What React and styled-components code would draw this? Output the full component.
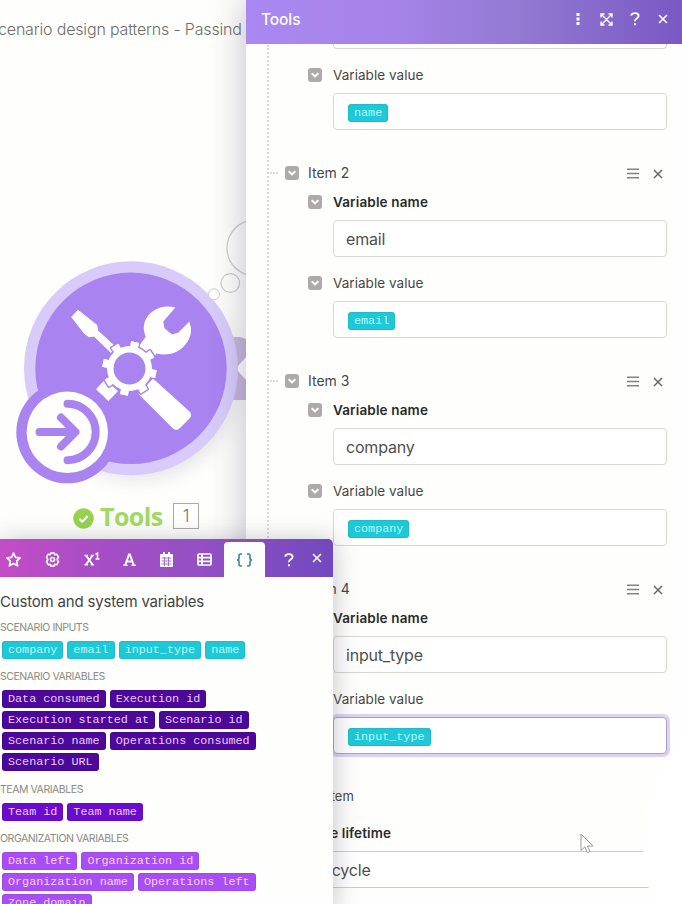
import React from "react";
import styled, { createGlobalStyle, css } from "styled-components";

const GlobalStyle = createGlobalStyle`
  *, *::before, *::after { box-sizing: border-box; }
  body { margin: 0; background: #fefefc; font-family: Inter, sans-serif; color: #484848; }
`;

const Page = styled.main`
  position: relative;
  display: grid;
  grid-template-columns: 246px 436px;
  width: 682px;
  height: 904px;
  overflow: hidden;
  background: #fefefc;
`;

/* ---------- canvas ---------- */

const Canvas = styled.section`
  position: relative;
  overflow: hidden;
`;

const ScenarioTitle = styled.h1`
  margin: 0;
  padding: 18px 0 0 0;
  margin-left: -2px;
  font-size: 16px;
  line-height: 22px;
  font-weight: 300;
  letter-spacing: -0.17px;
  white-space: nowrap;
  color: #6e6e68;
`;

const NodeDrawing = styled.svg`
  position: absolute;
  left: 0;
  top: 210px;
  width: 246px;
  height: 290px;
`;

const NodeCaption = styled.div`
  position: absolute;
  left: 73px;
  top: 500px;
  display: flex;
  align-items: center;
  height: 32px;
`;

const CheckIcon = styled.svg`
  width: 21px;
  height: 21px;
  margin: 5px 6px 0 0;
`;

const NodeName = styled.span`
  width: 73px;
  font: 700 25px/32px "Open Sans", sans-serif;
  letter-spacing: -0.6px;
  color: #a3d964;
`;

const NodeCount = styled.span`
  display: grid;
  place-items: center;
  width: 26px;
  height: 26px;
  border: 1px solid #a9a9a9;
  background: #fff;
  font-size: 17px;
  font-weight: 300;
  color: #777;
`;

/* ---------- settings panel ---------- */

const Panel = styled.section`
  position: relative;
  display: flex;
  flex-direction: column;
  background: #fefefc;
  box-shadow: -2px 0 32px rgba(60, 60, 90, 0.3);
  min-width: 0;
  overflow: visible;
`;

const PanelHeader = styled.header`
  display: flex;
  align-items: center;
  flex: none;
  height: 44px;
  padding: 0 10px 6px 15px;
  background: linear-gradient(90deg, #a988f2 0%, #a583e8 35%, #937ad2 62%, #7a58c4 100%);
  color: #fff;
`;

const PanelTitle = styled.h2`
  flex: 1;
  margin: 0;
  font-size: 15.5px;
  font-weight: 500;
  line-height: 20px;
  letter-spacing: -0.1px;
  padding-top: 2px;
`;

const HeaderActions = styled.div`
  display: flex;
  align-items: center;
  gap: 10.5px;
`;

const HeaderButton = styled.span`
  display: grid;
  place-items: center;
  width: 18px;
  height: 18px;
  color: #fff;
`;

const PanelBody = styled.div`
  position: relative;
  flex: 1;
  overflow: hidden;
`;

const TreeLine = styled.div`
  position: absolute;
  left: 21px;
  top: 1px;
  height: 620px;
  border-left: 2px dotted #dadad8;
`;

const HighlightDisc = styled.div`
  position: absolute;
  left: 397px;
  top: 637px;
  width: 328px;
  height: 328px;
  border-radius: 50%;
  background: #fff;
`;

const FieldRow = styled.div`
  display: flex;
  align-items: center;
  height: 36px;
  padding-left: 62px;
  margin-top: ${(p) => (p.$spaced ? "8px" : "0")};
`;

const FieldLabel = styled.span`
  margin-left: 11px;
  font-size: 13.5px;
  line-height: 18px;
  font-weight: ${(p) => (p.$strong ? 600 : 400)};
  letter-spacing: ${(p) => (p.$strong ? "0.15px" : "0.05px")};
  color: ${(p) => (p.$strong ? "#2b2b2b" : "#484848")};
`;

const Field = styled.div`
  display: flex;
  align-items: center;
  height: ${(p) => (p.$clipped ? "5px" : "37px")};
  width: 334px;
  margin-left: 87px;
  padding: 0 12px;
  border: 1px solid #dcd4cf;
  border-radius: 4px;
  background: #fff;
  font-size: 16px;
  letter-spacing: -0.2px;
  font-weight: 400;
  color: #505050;
  ${(p) => p.$clipped && css`
    border-top: 0;
    border-radius: 0 0 4px 4px;
    background: transparent;
  `}
  ${(p) => p.$focused && css`
    border-color: #aaa0cf;
    box-shadow: 0 0 0 3px #ddd2f1;
  `}
`;

const ItemHeader = styled.div`
  position: relative;
  display: flex;
  align-items: center;
  height: 22px;
  padding: 0 17px 0 39px;
  font-size: 14px;

  &::before {
    content: "";
    position: absolute;
    left: 24px;
    top: 10px;
    width: 8px;
    border-top: 2px dotted #dadad8;
  }
`;

const ItemName = styled.span`
  flex: 1;
  margin-left: 9px;
  padding-bottom: 2px;
`;

const ItemActions = styled.span`
  display: flex;
  align-items: center;
  gap: 14px;
  padding-top: 1px;
  padding-right: 2px;
  color: #66666a;
`;

const ItemBlock = styled.div`
  height: 208px;
`;

const FirstBlock = styled.div`
  height: 118px;
`;

const AddItem = styled.div`
  height: 20px;
  padding-left: 53px;
  font-size: 13px;
  line-height: 20px;
`;

const Lifetime = styled.div`
  padding-top: 27px;
  padding-left: 38px;
  height: 45px;
  font-size: 13.5px;
  line-height: 0;
  font-weight: 600;
  letter-spacing: 0.1px;
  color: #2b2b2b;
`;

const LifetimeField = styled(Field)`
  width: 386px;
  margin-left: 35px;
  padding-left: 15px;
  border-color: #ccc;
`;

const ToggleBox = styled.span`
  display: grid;
  place-items: center;
  flex: none;
  width: 14px;
  height: 14px;
  border-radius: 3px;
  background: #afa9a8;
`;

const Cursor = styled.svg`
  position: absolute;
  left: 580px;
  top: 833px;
  width: 14px;
  height: 21px;
`;

/* ---------- variables popup ---------- */

const Popup = styled.aside`
  position: absolute;
  left: 0;
  top: 539px;
  width: 333px;
  height: 375px;
  border-radius: 0 5px 0 0;
  background: #fefefc;
  box-shadow: 2px 0 24px rgba(60, 60, 90, 0.27);
`;

const TabBar = styled.nav`
  display: grid;
  grid-template-columns: 33px 39px 39px 37px 37px 39px 41px 48px 20px;
  align-items: end;
  height: 38px;
  border-radius: 0 5px 0 0;
  background: linear-gradient(90deg, #c34dc6 0%, #a84dc5 28%, #9450c4 60%, #7149bd 100%);
  color: #fff;
`;

const Tab = styled.span`
  display: grid;
  place-items: center;
  height: 35px;
  ${(p) => p.$active && css`
    background: #fefefc;
    border-radius: 4px 4px 0 0;
    color: #3b7fa0;
  `}
`;

const FirstTab = styled(Tab)`
  margin-left: -7px;
`;

const CloseTab = styled(Tab)`
  margin-left: -13px;
  padding-bottom: 3px;
`;

const PopupBody = styled.div`
  padding-top: 14.5px;
`;

const PopupTitle = styled.h3`
  margin: 0 0 8px;
  height: 20px;
  font-size: 15px;
  line-height: 20px;
  font-weight: 400;
  letter-spacing: -0.18px;
  color: #444;
  white-space: nowrap;
`;

const Group = styled.section`
  margin-bottom: 10.5px;
`;

const GroupTitle = styled.h4`
  margin: 0;
  height: 21px;
  font-size: 10.5px;
  line-height: 16px;
  font-weight: 400;
  letter-spacing: -0.45px;
  color: #8b8b84;
`;

const ChipLine = styled.div`
  display: flex;
  gap: 4px;
  padding-left: 2px;
  margin-bottom: 3px;
  &:last-child { margin-bottom: 0; }
`;

const tones = {
  cyan: ["#1fc8d6", "#b5fbff"],
  indigo: ["#4b0899", "#efc9ff"],
  violet: ["#6b0bcb", "#f4c8ff"],
  purple: ["#a94df5", "#fbd2ff"],
};

const Chip = styled.span`
  display: inline-block;
  height: 18px;
  padding: 0 6px;
  border-radius: 3px;
  background: ${(p) => tones[p.$tone][0]};
  color: ${(p) => tones[p.$tone][1]};
  box-shadow: inset 0 0 0 1px rgba(0, 0, 0, 0.06);
  font: 400 11.75px/18px "Liberation Mono", monospace;
  letter-spacing: 0;
  white-space: pre;
`;

const FieldChip = styled(Chip)`
  margin: 2px 0 0 2px;
`;

const Toggle = () => (
  <ToggleBox>
    <svg width="8" height="8" viewBox="0 0 8 8">
      <path d="M.7 2.200 4 5.400 7.300 2.200" fill="none" stroke="#fff" strokeWidth="2" />
    </svg>
  </ToggleBox>
);

const Cross = ({ size = 10, weight = 1.6 }) => (
  <svg width={size} height={size} viewBox="0 0 10 10" stroke="currentColor" strokeWidth={weight}>
    <path d="M1 1 9 9M9 1 1 9" />
  </svg>
);

const Question = () => (
  <svg width="10" height="14" viewBox="0 0 10 14" fill="none" stroke="currentColor" strokeWidth="1.8">
    <path d="M1.2 3.6C1.6 .5 8.6 .2 8.6 4 8.6 6.3 4.9 6.4 4.9 9.2" />
    <path d="M4 11.3h2v2H4z" fill="currentColor" stroke="none" />
  </svg>
);

const Valued = ({ value, focused }) => (
  <>
    <FieldRow $spaced>
      <Toggle />
      <FieldLabel>Variable value</FieldLabel>
    </FieldRow>
    <Field $focused={focused}>
      <FieldChip $tone="cyan">{value}</FieldChip>
    </Field>
  </>
);

const Item = ({ index, name, focused }) => (
  <ItemBlock>
    <ItemHeader>
      <Toggle />
      <ItemName>Item {index}</ItemName>
      <ItemActions>
        <svg width="12" height="11" viewBox="0 0 12 11" stroke="#82828a" strokeWidth="1.5">
          <path d="M0 1.2h12M0 5.5h12M0 9.8h12" />
        </svg>
        <Cross size={10} weight={1.5} />
      </ItemActions>
    </ItemHeader>
    <FieldRow>
      <Toggle />
      <FieldLabel $strong>Variable name</FieldLabel>
    </FieldRow>
    <Field>{name}</Field>
    <Valued value={name} focused={focused} />
  </ItemBlock>
);

const groups = [
  { title: "SCENARIO INPUTS", tone: "cyan", lines: [["company", "email", "input_type", "name"]] },
  {
    title: "SCENARIO VARIABLES",
    tone: "indigo",
    lines: [
      ["Data consumed", "Execution id"],
      ["Execution started at", "Scenario id"],
      ["Scenario name", "Operations consumed"],
      ["Scenario URL"],
    ],
  },
  { title: "TEAM VARIABLES", tone: "violet", lines: [["Team id", "Team name"]] },
  {
    title: "ORGANIZATION VARIABLES",
    tone: "purple",
    lines: [["Data left", "Organization id"], ["Organization name", "Operations left"], ["Zone domain"]],
  },
];

const teeth = [12, 57, 102, 147, 192, 237, 282, 327];

const ToolsNode = () => (
  <NodeDrawing viewBox="0 210 246 290">
    <defs>
      <filter id="soft" x="-30%" y="-30%" width="160%" height="160%">
        <feGaussianBlur stdDeviation="9" />
      </filter>
    </defs>
    <g fill="#fefefc" fillOpacity=".5" stroke="#ccccc8" strokeWidth="1.2">
      <circle cx="255" cy="248" r="28" />
      <circle cx="230.3" cy="283" r="9.3" />
    </g>
    <circle cx="138" cy="380" r="100" fill="#555570" opacity=".15" filter="url(#soft)" />
    <path d="M226 337h14l6 2v18l-10 11.500 10 11.500v20h-20z" fill="#c6b7dd" />
    <path d="M247 356 236 368.500 247 381z" fill="#fff" />
    <circle cx="131" cy="368.300" r="107" fill="#d8cbfa" />
    <circle cx="131" cy="368.300" r="95.700" fill="#a983f0" />
    <circle cx="214" cy="294.300" r="5.500" fill="#fff" stroke="#d0ccd8" />
    <g fill="#fff">
      <path d="M71.700 317 78 310.300 96.700 325 97.700 330.700 116 347.500 111 352.500 94 336 89 336.700 84.500 333.500Z" stroke="#fff" strokeLinejoin="round" />
      <path d="M175.300 307.500C158 303 142 315 144 331L145.700 337 138 347 152 360 156.500 353.500C175 358 189 346 191 332V328L189.300 321.500 178.500 332.500 172 334.500 164.300 328 163.300 321.500Z" />
      <path d="M153 378.500 189.500 411.500Q192.500 414.500 190 418L180 428Q176.500 431.500 173 428.500L138.500 394Z" />
      <path d="M105 379.500 96 389.300 108.300 401.300 118 391Z" />
    </g>
    <g fill="#fff" stroke="#a983f0" strokeWidth="3" strokeLinejoin="round" paintOrder="stroke">
      {teeth.map((a) => (
        <rect key={a} x="125.500" y="341.500" width="8" height="10" transform={`rotate(${a} 129.500 368.500)`} />
      ))}
      <circle cx="129.500" cy="368.500" r="22.500" />
    </g>
    <g fill="#fff">
      {teeth.map((a) => (
        <rect key={a} x="125.500" y="341.500" width="8" height="10" transform={`rotate(${a} 129.500 368.500)`} />
      ))}
    </g>
    <circle cx="129.500" cy="368.500" r="16" fill="#a983f0" />
    <circle cx="67.300" cy="432.300" r="51" fill="#a983f0" />
    <circle cx="67.300" cy="432.300" r="40.700" fill="#fefefc" />
    <g fill="none" stroke="#a983f0" strokeWidth="8" strokeLinecap="round" strokeLinejoin="round">
      <path d="M39.500 432H75M61 417.500 75.500 432 61 446.500" />
      <path d="M67.500 403.800A28.200 28.200 0 0 1 67.500 460.200" />
    </g>
  </NodeDrawing>
);

export default function App() {
  return (
    <Page>
      <GlobalStyle />
      <Canvas>
        <ScenarioTitle>cenario design patterns - Passind</ScenarioTitle>
        <ToolsNode />
        <NodeCaption>
          <CheckIcon viewBox="0 0 21 21">
            <circle cx="10.5" cy="10.5" r="10.3" fill="#95d350" />
            <path d="m6.300 10.800 2.900 2.900 5.500-5.700" fill="none" stroke="#fff" strokeWidth="2" />
          </CheckIcon>
          <NodeName>Tools</NodeName>
          <NodeCount>1</NodeCount>
        </NodeCaption>
      </Canvas>

      <Panel>
        <PanelHeader>
          <PanelTitle>Tools</PanelTitle>
          <HeaderActions>
            <HeaderButton>
              <svg width="4" height="12" viewBox="0 0 4 12" fill="currentColor">
                <path d="M.5 0h3v3h-3zM.5 4.500h3v3h-3zM.5 9h3v3h-3z" />
              </svg>
            </HeaderButton>
            <HeaderButton>
              <svg width="13" height="13" viewBox="0 0 13 13" fill="none" stroke="currentColor" strokeWidth="1.4">
                <path d="M1 4.500V1h3.500M8.500 1H12v3.500M12 8.500V12H8.500M4.500 12H1V8.500M1 1l11 11M12 1 1 12" />
              </svg>
            </HeaderButton>
            <HeaderButton><Question /></HeaderButton>
            <HeaderButton><Cross /></HeaderButton>
          </HeaderActions>
        </PanelHeader>
        <PanelBody>
          <TreeLine />
          <FirstBlock>
            <Field $clipped />
            <Valued value="name" />
          </FirstBlock>
          <Item index={2} name="email" />
          <Item index={3} name="company" />
          <Item index={4} name="input_type" focused />
          <AddItem>Add item</AddItem>
          <Lifetime>Variable lifetime</Lifetime>
          <LifetimeField>One cycle</LifetimeField>
          <HighlightDisc />
        </PanelBody>
      </Panel>

      <Cursor viewBox="0 0 14 21">
        <path d="M1 1v16.500l3.800-3.600 2.600 5.800 2.600-1.200-2.500-5.500H13z" fill="#fff" stroke="#999" strokeWidth="1" />
      </Cursor>

      <Popup>
        <TabBar>
          <FirstTab>
            <svg width="15" height="15" viewBox="0 0 15 15" fill="none" stroke="currentColor" strokeWidth="1.700" strokeLinejoin="round">
              <path d="m7.500 1 2 4.300 4.600.6-3.400 3.200.9 4.700-4.100-2.300-4.100 2.300.9-4.700L.9 5.900l4.600-.6z" />
            </svg>
          </FirstTab>
          <Tab>
            <svg width="15" height="15" viewBox="0 0 15 15" fill="none" stroke="currentColor" strokeWidth="1.600" strokeLinejoin="round">
              <path d="M5.800 1h3.400l.5 1.700 2.100-.4 1.700 2.900L12.300 7v1l1.200 1.800-1.700 2.900-2.100-.4-.5 1.700H5.800l-.5-1.700-2.100.4-1.700-2.900L2.700 8V7L1.500 5.200l1.700-2.900 2.100.4z" />
              <circle cx="7.500" cy="7.500" r="2" />
            </svg>
          </Tab>
          <Tab>
            <svg width="16" height="15" viewBox="0 0 16 15" fill="none" stroke="currentColor">
              <path d="M2 3.500 8.500 12.500M8.500 3.500 2 12.500" strokeWidth="2" />
              <path d="M.5 3.500h3.500M6.800 3.500H10M.5 12.700H4M6.800 12.700H10M11.500 2.500 13.500 1.200V7M11.500 7H15.500" strokeWidth="1.500" />
            </svg>
          </Tab>
          <Tab>
            <svg width="13" height="13" viewBox="0 0 13 13" fill="none" stroke="currentColor">
              <path d="M2.300 12 6 1.500h.8L10.700 12M3.800 8.500h5.500" strokeWidth="2" />
              <path d="M.2 12.200H4.500M8.500 12.200H12.800" strokeWidth="1.600" />
            </svg>
          </Tab>
          <Tab>
            <svg width="13" height="15" viewBox="0 0 13 15">
              <path d="M1 2h2V0h2v2h3V0h2v2h2q1 0 1 1v11q0 1-1 1H1q-1 0-1-1V3q0-1 1-1z" fill="currentColor" />
              <path d="M1.500 6h10M1.500 9h10M1.500 12h10M4.500 5v9M8.500 5v9" stroke="#9b50c5" strokeWidth=".8" />
            </svg>
          </Tab>
          <Tab>
            <svg width="15" height="13" viewBox="0 0 15 13" fill="none" stroke="currentColor" strokeWidth="1.700">
              <rect x="1" y="1" width="13" height="11" rx="1" />
              <path d="M1 4.600h13M1 8.300h13M5 1v11" />
            </svg>
          </Tab>
          <Tab $active>
            <svg width="17" height="14" viewBox="0 0 17 14" fill="none" stroke="currentColor" strokeWidth="1.600">
              <path d="M6 1H4.500Q3 1 3 2.500V5Q3 7 1 7 3 7 3 9v2.500Q3 13 4.500 13H6M11 1h1.500Q14 1 14 2.500V5q0 2 2 2-2 0-2 2v2.500q0 1.500-1.500 1.500H11" />
            </svg>
          </Tab>
          <Tab><Question /></Tab>
          <CloseTab><Cross /></CloseTab>
        </TabBar>
        <PopupBody>
          <PopupTitle>Custom and system variables</PopupTitle>
          {groups.map((g) => (
            <Group key={g.title}>
              <GroupTitle>{g.title}</GroupTitle>
              {g.lines.map((line) => (
                <ChipLine key={line[0]}>
                  {line.map((t) => <Chip key={t} $tone={g.tone}>{t}</Chip>)}
                </ChipLine>
              ))}
            </Group>
          ))}
        </PopupBody>
      </Popup>
    </Page>
  );
}
